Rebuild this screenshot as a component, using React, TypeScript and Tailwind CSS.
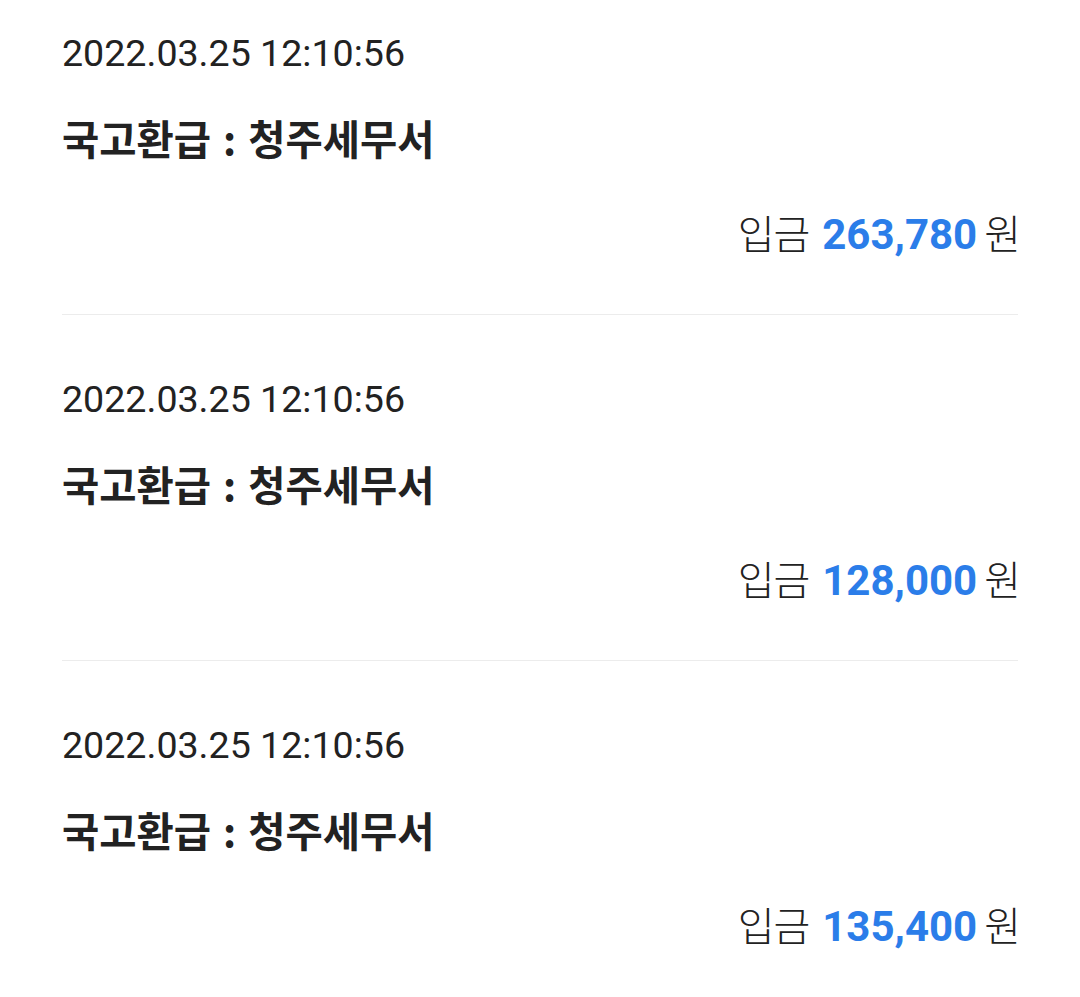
import React from 'react';

type Deposit = {
  id: number;
  date: string;
  place: string;
  amount: string;
};

const deposits: Deposit[] = [
  { id: 1, date: '2022.03.25 12:10:56', place: '청주세무서', amount: '263,780' },
  { id: 2, date: '2022.03.25 12:10:56', place: '청주세무서', amount: '128,000' },
  { id: 3, date: '2022.03.25 12:10:56', place: '청주세무서', amount: '135,400' },
];

const App: React.FC = () => {
  return (
    <div className="min-h-screen bg-white px-[62px] text-[#222222] font-['Roboto','Noto_Sans_CJK_KR',sans-serif]">
      {deposits.map(d => (
        <div key={d.id} className="border-b border-[#ececec] pt-[62px] pb-[53px] first:pt-[31px]">
          <div className="text-[37.6px] leading-[44px]">{d.date}</div>
          <div className="mt-[39px] flex text-[40.5px] leading-[48px] font-bold font-['Noto_Sans_CJK_KR',sans-serif]">
            <span>국고환급</span>
            <span className="mx-[12px]">:</span>
            <span>{d.place}</span>
          </div>
          <div className="mt-[44px] -mr-[3px] flex items-baseline justify-end leading-[52px]">
            <span className="text-[40px] tracking-[-1px] font-['Noto_Sans_CJK_KR',sans-serif] font-light">입금</span>
            <span className="ml-[13px] text-[42px] font-bold text-[#2b7de9]">{d.amount}</span>
            <span className="ml-[7px] text-[40px] font-['Noto_Sans_CJK_KR',sans-serif] font-light">원</span>
          </div>
        </div>
      ))}
    </div>
  );
};

export default App;
